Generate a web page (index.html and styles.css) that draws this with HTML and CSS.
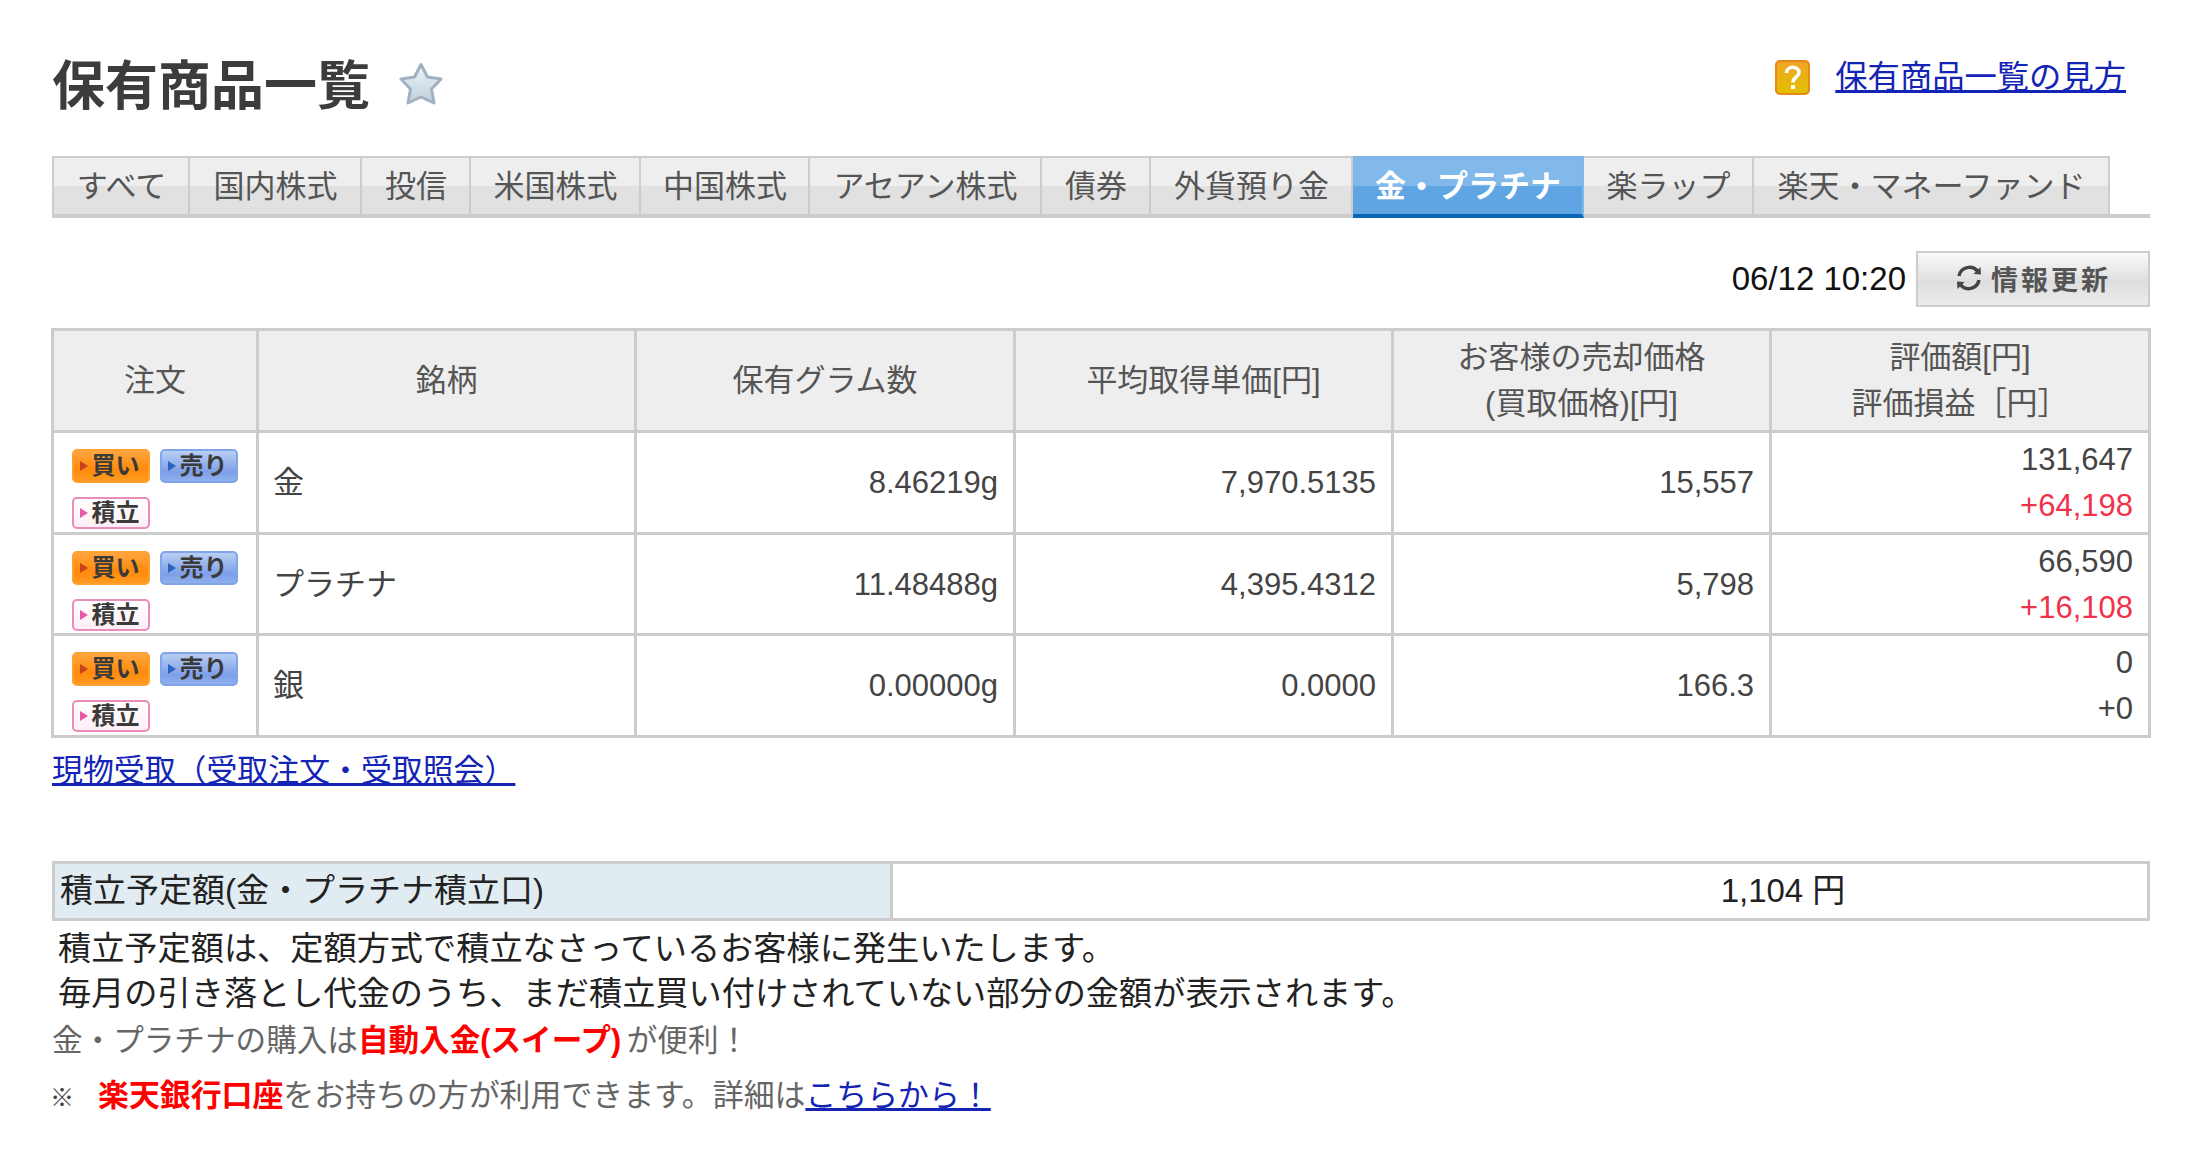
FILE: index.html
```html
<!DOCTYPE html>
<html lang="ja">
<head>
<meta charset="UTF-8">
<meta name="viewport" content="width=device-width, initial-scale=1.0">
<title>保有商品一覧</title>
<link rel="stylesheet" href="styles.css">
</head>
<body>

<div class="container">

<!-- Title row -->
<div class="title-row">
<div class="title-left">
<h1>保有商品一覧</h1>
<svg class="star" viewBox="0 0 44 44">
<defs>
<linearGradient id="starFill" x1="0" y1="0" x2="0" y2="1">
<stop offset="0" stop-color="#eef3f7"/>
<stop offset="1" stop-color="#bfd0dc"/>
</linearGradient>
</defs>
<path d="M22 2.500 L28.500 15 L42 17 L32.500 27 L35 41 L22 35 L9 41 L11.500 27 L2 17 L15.500 15 Z" fill="url(#starFill)" stroke="#a0b2c1" stroke-width="3" stroke-linejoin="round"/>
</svg>
</div>
<div class="help">
<svg class="help-icon" viewBox="0 0 35 35">
<defs>
<linearGradient id="helpFill" x1="0" y1="0" x2="0" y2="1">
<stop offset="0" stop-color="#f0a526"/>
<stop offset="1" stop-color="#e2c000"/>
</linearGradient>
</defs>
<rect x="1" y="1" width="33" height="33" rx="4" fill="url(#helpFill)" stroke="#e8871a" stroke-width="2"/>
<path d="M11.500 13 C11.500 5.500 24 5.500 24 12.500 C24 17 18 17 18 22.500" fill="none" stroke="#fff" stroke-width="3.500"/>
<rect x="16" y="25" width="4" height="4" fill="#fff"/>
</svg>
<a href="#" class="help-link">保有商品一覧の見方</a>
</div>
</div>

<!-- Tabs -->
<ul class="tabs">
<li class="tab t1">すべて</li>
<li class="tab t2">国内株式</li>
<li class="tab t3">投信</li>
<li class="tab t4">米国株式</li>
<li class="tab t5">中国株式</li>
<li class="tab t6">アセアン株式</li>
<li class="tab t7">債券</li>
<li class="tab t8">外貨預り金</li>
<li class="tab t9 active">金・プラチナ</li>
<li class="tab t10">楽ラップ</li>
<li class="tab t11">楽天・マネーファンド</li>
</ul>

<div class="update-row">
<span class="update-time">06/12 10:20</span>
<button class="update-btn">
<svg class="refresh" viewBox="0 0 28 28">
<path d="M4 12 A10.500 10.500 0 0 1 23 8" fill="none" stroke="#444" stroke-width="3.500"/>
<path d="M18.500 10 L26 10.500 L25.500 3 Z" fill="#444"/>
<path d="M24 16 A10.500 10.500 0 0 1 5 20" fill="none" stroke="#444" stroke-width="3.500"/>
<path d="M9.500 18 L2 17.500 L2.500 25 Z" fill="#444"/>
</svg>
情報更新
</button>
</div>

<!-- Holdings table -->
<table class="holdings">
<thead>
<tr>
<th class="col-order">注文</th>
<th class="col-name">銘柄</th>
<th class="col-grams">保有グラム数</th>
<th class="col-avg">平均取得単価[円]</th>
<th class="col-sell">お客様の売却価格<br>(買取価格)[円]</th>
<th class="col-last">評価額[円]<br>評価損益［円］</th>
</tr>
</thead>
<tbody>
<tr>
<td class="order">
<div class="order-btns">
<a class="mini buy"><i></i>買い</a><a class="mini sell"><i></i>売り</a><a class="mini save"><i></i>積立</a>
</div>
</td>
<td class="name">金</td>
<td class="num">8.46219g</td>
<td class="num">7,970.5135</td>
<td class="num">15,557</td>
<td class="num">131,647<br><span class="plus">+64,198</span></td>
</tr>
<tr>
<td class="order">
<div class="order-btns">
<a class="mini buy"><i></i>買い</a><a class="mini sell"><i></i>売り</a><a class="mini save"><i></i>積立</a>
</div>
</td>
<td class="name">プラチナ</td>
<td class="num">11.48488g</td>
<td class="num">4,395.4312</td>
<td class="num">5,798</td>
<td class="num">66,590<br><span class="plus">+16,108</span></td>
</tr>
<tr>
<td class="order">
<div class="order-btns">
<a class="mini buy"><i></i>買い</a><a class="mini sell"><i></i>売り</a><a class="mini save"><i></i>積立</a>
</div>
</td>
<td class="name">銀</td>
<td class="num">0.00000g</td>
<td class="num">0.0000</td>
<td class="num">166.3</td>
<td class="num">0<br>+0</td>
</tr>
</tbody>
</table>

<p class="receive"><a href="#">現物受取（受取注文・受取照会）</a></p>

<!-- Planned amount -->
<div class="plan">
<div class="plan-label">積立予定額(金・プラチナ積立口)</div>
<div class="plan-value">1,104 円</div>
</div>

<p class="plan-note">積立予定額は、定額方式で積立なさっているお客様に発生いたします。<br>毎月の引き落とし代金のうち、まだ積立買い付けされていない部分の金額が表示されます。</p>
<p class="sweep">金・プラチナの購入は<b>自動入金(スイープ)</b> が便利！</p>
<p class="bank"><span class="mark">※</span><b>楽天銀行口座</b>をお持ちの方が利用できます。詳細は<a href="#">こちらから！</a></p>

</div>

</body>
</html>
```

FILE: styles.css
```css
* {
box-sizing: border-box;
}

body {
margin: 0;
background-color: #fff;
color: #444;
font-family: "Liberation Sans", "Noto Sans CJK JP", sans-serif;
font-size: 31px;
}

.container {
padding: 50px 45px 0 52px;
}

a {
color: #1424b4;
text-decoration: underline;
}

p {
margin: 0;
}

/* title */
.title-row {
display: flex;
justify-content: space-between;
align-items: center;
height: 70px;
padding-right: 24px;
}

.title-left {
display: flex;
align-items: center;
}

h1 {
margin: 4px 0 0;
font-size: 53px;
font-weight: bold;
line-height: 70px;
color: #3c3c3c;
}

.star {
width: 44px;
height: 44px;
margin: 0 0 2px 29px;
}

.help {
display: flex;
align-items: center;
padding-bottom: 16px;
}

.help-icon {
width: 35px;
height: 35px;
margin-right: 25px;
}

.help-link {
font-size: 32.300px;
line-height: 40px;
}

/* tabs */
.tabs {
display: flex;
height: 62px;
margin: 36px 0 0;
padding: 0;
list-style: none;
border-bottom: 4px solid #ccc;
}

.tab {
height: 62px;
padding-left: 1px;
border: 2px solid #ccc;
border-left-width: 0;
border-bottom-width: 4px;
background: linear-gradient(#eeeeee 50%, #e1e1e1 50%);
color: #555;
font-size: 31px;
line-height: 58px;
text-align: center;
white-space: nowrap;
}

.t1 { width: 138px; border-left-width: 2px; }
.t2 { width: 172px; }
.t3 { width: 109px; }
.t4 { width: 170px; }
.t5 { width: 169px; }
.t6 { width: 232px; }
.t7 { width: 109px; }
.t8 { width: 202px; }
.t9 { width: 231px; }
.t10 { width: 170px; }
.t11 { width: 356px; }

.tab.active {
border-color: #7db8ea;
border-bottom-color: #0a66b5;
background: linear-gradient(#80b9ea 50%, #5fa4e3 50%);
color: #fff;
font-weight: bold;
}

/* update row */
.update-row {
display: flex;
justify-content: flex-end;
align-items: center;
margin-top: 33px;
}

.update-time {
margin-right: 10px;
color: #111;
font-size: 33px;
}

.update-btn {
display: flex;
justify-content: center;
align-items: center;
width: 234px;
height: 56px;
padding: 0 0 2px;
border: 2px solid #ccc;
background: linear-gradient(#fafafa, #dedede 55%, #ececec);
color: #555;
font-family: inherit;
font-size: 27px;
font-weight: bold;
letter-spacing: 3px;
}

.refresh {
width: 28px;
height: 28px;
margin-right: 8px;
}

/* holdings table */
.holdings {
width: 2097px;
margin: 21px 0 0 -1px;
border-collapse: collapse;
table-layout: fixed;
}

.holdings th,
.holdings td {
border: 3px solid #ccc;
}

.holdings th {
height: 102px;
background-color: #eee;
color: #555;
font-weight: normal;
line-height: 46px;
}

.col-order { width: 205px; }
.col-name { width: 378px; }
.col-grams { width: 379px; }
.col-avg { width: 378px; }
.col-sell { width: 378px; }
.col-last { width: 379px; }

.holdings td {
height: 101.500px;
padding: 2px 15px 0;
line-height: 46px;
}

.holdings td.num {
text-align: right;
}

.holdings td.order {
padding: 0;
vertical-align: top;
}

.holdings td.name {
padding-left: 14px;
}

.plus {
color: #f0324a;
}

.order-btns {
display: flex;
flex-wrap: wrap;
gap: 14px 10px;
padding: 16px 0 0 18px;
}

.mini {
display: flex;
align-items: center;
justify-content: center;
width: 78px;
height: 34px;
padding-left: 9px;
border: 2px solid;
border-radius: 5px;
color: #3a3a3a;
font-size: 24px;
font-weight: bold;
text-decoration: none;
position: relative;
}

.mini i {
position: absolute;
left: 6px;
top: 10px;
border-left: 8px solid;
border-top: 5px solid transparent;
border-bottom: 5px solid transparent;
}

.buy {
border-color: #ffa033;
background: linear-gradient(#ffa640, #ff8a0c 60%, #ff9a20);
}

.buy i {
border-left-color: #c8421c;
}

.sell {
border-color: #7fa4ea;
background: linear-gradient(#b9cef3, #7d9fe8 70%, #8fafec);
}

.sell i {
border-left-color: #2a62c0;
}

.save {
height: 32px;
border-color: #ea8cbc;
background: linear-gradient(#fff, #fdeef6);
}

.save i {
top: 9px;
border-left-color: #e85aa4;
}

.receive {
margin-top: 13px;
font-size: 30.900px;
line-height: 40px;
}

/* planned amount */
.plan {
display: flex;
width: 2098px;
height: 60px;
margin-top: 70px;
border: 3px solid #ccc;
font-size: 33px;
color: #222;
}

.plan-label {
width: 838px;
padding-left: 5px;
border-right: 3px solid #ccc;
background-color: #e0ebf2;
line-height: 54px;
white-space: nowrap;
}

.plan-value {
flex: 1;
padding-left: 526px;
text-align: center;
line-height: 54px;
}

.plan-note {
margin-top: 5px;
padding-left: 6px;
color: #222;
font-size: 33.200px;
line-height: 45px;
}

.sweep {
margin-top: 2px;
color: #666;
font-size: 30.600px;
line-height: 44px;
word-spacing: -3px;
}

.sweep b,
.bank b {
color: #f00;
}

.bank {
margin-top: 12px;
color: #666;
font-size: 30.900px;
line-height: 44px;
}

.mark {
display: inline-block;
width: 48px;
margin-left: -2px;
color: #444;
font-size: 24px;
}
```
